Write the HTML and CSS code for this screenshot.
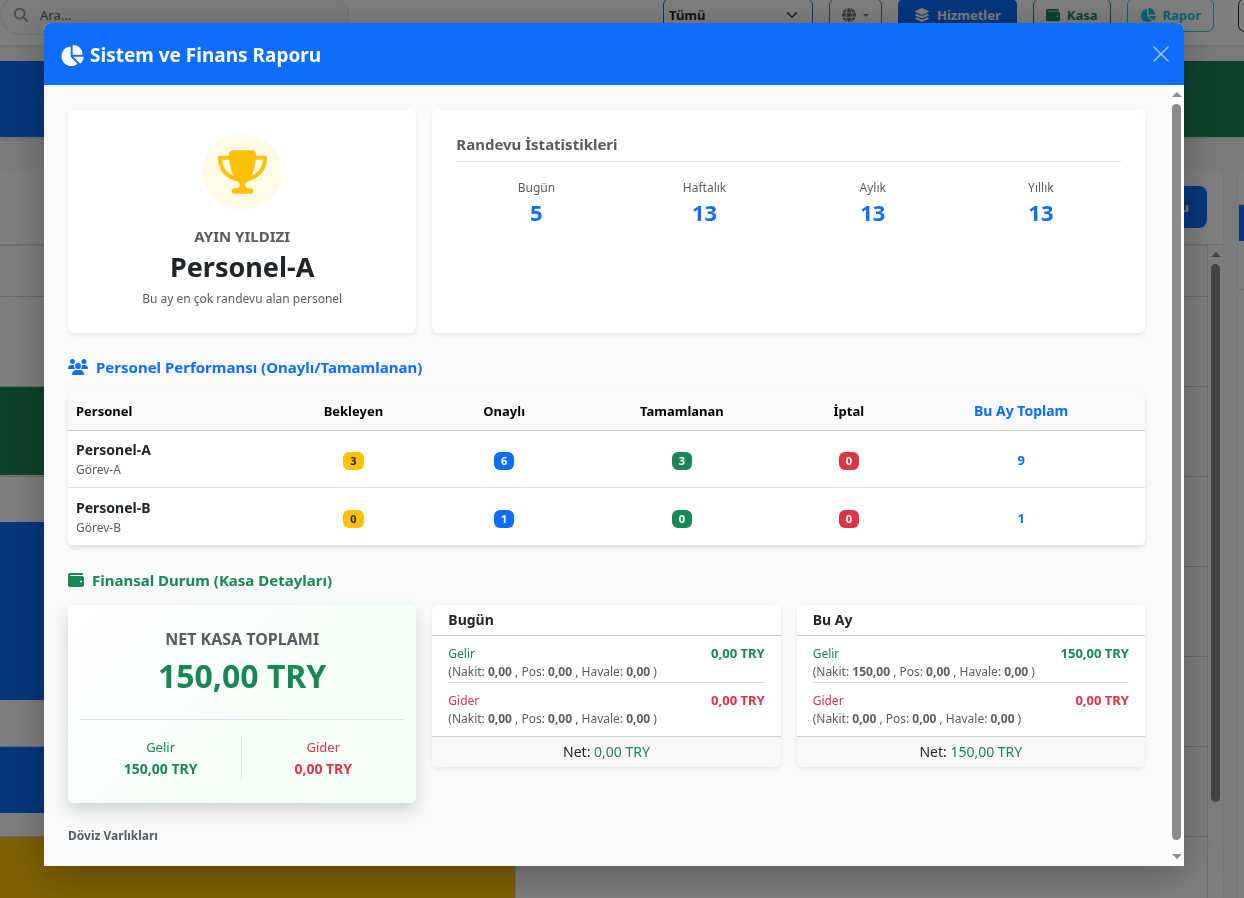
FILE: index.html
```html
<!DOCTYPE html>
<html lang="tr">
<head>
    <meta charset="UTF-8">
    <meta name="viewport" content="width=device-width, initial-scale=1.0">
    <title>Sistem ve Finans Raporu</title>
    <link rel="stylesheet" href="styles.css">
</head>
<body>
    <!-- İkonlar -->
    <svg class="sprite" aria-hidden="true">
        <symbol id="i-pie" viewBox="0 0 576 512"><path d="M304 240l0-223.4c0-9 7-16.6 16-16.6C443.7 0 544 100.3 544 224c0 9-7.600 16-16.600 16L304 240zM32 272C32 150.700 122.100 50.300 239 34.300c9.200-1.300 17 6.100 17 15.400L256 288 412.500 444.500c6.700 6.700 6.200 17.700-1.500 23.100C371.800 495.600 323.800 512 272 512C139.500 512 32 404.600 32 272zm526.400 16c9.300 0 16.600 7.800 15.400 17c-7.700 55.900-34.600 105.600-73.900 142.300c-6 5.600-15.400 5.200-21.200-.7L320 288l238.400 0z"/></symbol>
        <symbol id="i-search" viewBox="0 0 512 512"><path d="M416 208c0 45.900-14.900 88.300-40 122.700L502.600 457.400c12.500 12.500 12.500 32.800 0 45.300s-32.800 12.500-45.300 0L330.700 376c-34.400 25.200-76.800 40-122.700 40C93.100 416 0 322.900 0 208S93.100 0 208 0S416 93.100 416 208zM208 352a144 144 0 1 0 0-288 144 144 0 1 0 0 288z"/></symbol>
        <symbol id="i-wallet" viewBox="0 0 512 512"><path d="M64 32C28.700 32 0 60.700 0 96L0 416c0 35.300 28.700 64 64 64l384 0c35.300 0 64-28.700 64-64l0-224c0-35.300-28.700-64-64-64L80 128c-8.800 0-16-7.200-16-16s7.200-16 16-16l368 0c17.700 0 32-14.300 32-32s-14.300-32-32-32L64 32zM416 272a32 32 0 1 1 0 64 32 32 0 1 1 0-64z"/></symbol>
        <symbol id="i-layers" viewBox="0 0 576 512"><path d="M264.500 5.200c14.900-6.900 32.100-6.900 47 0l218.600 101c8.500 3.900 13.900 12.400 13.900 21.800s-5.400 17.900-13.900 21.800l-218.600 101c-14.900 6.900-32.100 6.900-47 0L45.900 149.800C37.400 145.800 32 137.300 32 128s5.400-17.900 13.900-21.800L264.500 5.200zM476.900 209.600l53.200 24.600c8.500 3.900 13.900 12.400 13.900 21.800s-5.400 17.900-13.900 21.800l-218.600 101c-14.900 6.900-32.100 6.900-47 0L45.900 277.800C37.400 273.800 32 265.300 32 256s5.400-17.900 13.900-21.800l53.200-24.600 152 70.200c23.400 10.800 50.400 10.800 73.800 0l152-70.200zm-152 198.200l152-70.200 53.200 24.600c8.500 3.900 13.900 12.400 13.900 21.800s-5.400 17.900-13.900 21.800l-218.600 101c-14.900 6.900-32.100 6.900-47 0L45.900 405.800C37.400 401.800 32 393.300 32 384s5.400-17.900 13.900-21.800l53.200-24.600 152 70.200c23.400 10.800 50.400 10.800 73.800 0z"/></symbol>
        <symbol id="i-globe" viewBox="0 0 512 512"><path d="M352 256c0 22.200-1.200 43.600-3.300 64H163.300c-2.200-20.400-3.300-41.800-3.300-64s1.200-43.600 3.300-64H348.700c2.200 20.400 3.300 41.800 3.300 64zm28.800-64H503.900c5.300 20.500 8.100 41.900 8.100 64s-2.800 43.500-8.100 64H380.800c2.100-20.600 3.200-42 3.200-64s-1.100-43.400-3.200-64zm112.600-32H376.700c-10-63.900-29.800-117.400-55.300-151.600c78.300 20.700 142 77.500 171.900 151.600zm-149.100 0H167.700c6.100-36.400 15.500-68.600 27-94.700c10.500-23.600 22.200-40.700 33.500-51.500C239.400 3.200 248.700 0 256 0s16.600 3.200 27.800 13.800c11.300 10.800 23 27.900 33.500 51.500c11.600 26 20.900 58.200 27 94.700zm-209 0H18.600C48.600 85.900 112.200 29.100 190.600 8.400C165.100 42.600 145.300 96.100 135.300 160zM8.100 192H131.200c-2.100 20.600-3.200 42-3.200 64s1.100 43.400 3.200 64H8.100C2.800 299.500 0 278.100 0 256s2.800-43.500 8.100-64zM194.700 446.600c-11.600-26-20.900-58.200-27-94.600H344.300c-6.100 36.400-15.500 68.600-27 94.600c-10.500 23.600-22.200 40.700-33.500 51.500C272.600 508.800 263.300 512 256 512s-16.600-3.200-27.800-13.800c-11.300-10.800-23-27.900-33.500-51.500zM135.300 352c10 63.900 29.800 117.400 55.300 151.600C112.200 482.900 48.600 426.100 18.600 352H135.300zm358.100 0c-30 74.100-93.600 130.900-171.900 151.600c25.500-34.200 45.200-87.700 55.300-151.600H493.400z"/></symbol>
        <symbol id="i-users" viewBox="0 0 640 512"><path d="M144 0a80 80 0 1 1 0 160A80 80 0 1 1 144 0zM512 0a80 80 0 1 1 0 160A80 80 0 1 1 512 0zM0 298.700C0 239.800 47.800 192 106.700 192h42.700c15.900 0 31 3.500 44.600 9.700c-1.300 7.200-1.900 14.700-1.900 22.300c0 38.200 16.800 72.500 43.300 96c-.2 0-.4 0-.7 0H21.300C9.600 320 0 310.400 0 298.700zM405.300 320c-.2 0-.4 0-.7 0c26.600-23.500 43.300-57.800 43.300-96c0-7.600-.7-15-1.900-22.300c13.600-6.300 28.700-9.700 44.600-9.700h42.700C592.200 192 640 239.800 640 298.700c0 11.800-9.600 21.300-21.300 21.300H405.300zM224 224a96 96 0 1 1 192 0 96 96 0 1 1 -192 0zM128 485.300C128 411.700 187.700 352 261.300 352H378.700C452.300 352 512 411.700 512 485.300c0 14.700-11.900 26.700-26.700 26.700H154.700c-14.700 0-26.700-11.900-26.700-26.700z"/></symbol>
        <symbol id="i-trophy" viewBox="0 0 576 512"><path d="M400 0L176 0c-26.500 0-48.100 21.800-47.100 48.200c.2 5.300 .4 10.600 .7 15.800L24 64C10.700 64 0 74.700 0 88c0 92.600 33.500 157 78.500 200.700c44.300 43.100 98.300 64.800 138.100 75.800c23.400 6.500 39.400 26 39.400 45.600c0 20.900-17 37.900-37.900 37.900L192 448c-17.700 0-32 14.300-32 32s14.300 32 32 32l192 0c17.700 0 32-14.300 32-32s-14.300-32-32-32l-26.100 0C337 448 320 431 320 410.100c0-19.600 15.900-39.200 39.400-45.600c39.900-11 93.900-32.700 138.200-75.800C542.500 245 576 180.600 576 88c0-13.300-10.700-24-24-24L446.400 64c.3-5.200 .5-10.400 .7-15.800C448.100 21.800 426.500 0 400 0zM48.900 112l84.400 0c9.100 90.100 29.200 150.300 51.900 190.600c-24.900-11-50.800-26.500-73.200-48.300c-32-31.100-58-76-63-142.300zM464.100 254.300c-22.400 21.800-48.300 37.300-73.200 48.300c22.700-40.300 42.800-100.500 51.900-190.600l84.400 0c-5.100 66.300-31.100 111.200-63 142.300z"/></symbol>
    </svg>

    <div class="page">
        <header class="topbar">
            <div class="search">
                <svg class="icon"><use href="#i-search"/></svg>
                <input type="text" placeholder="Ara..." aria-label="Ara">
            </div>
            <div class="actions">
                <select class="filter" aria-label="Personel filtresi">
                    <option>Tümü</option>
                </select>
                <button class="btn btn-grey" aria-label="Dil"><svg class="icon"><use href="#i-globe"/></svg><span class="caret"></span></button>
                <button class="btn btn-blue"><svg class="icon icon-wide"><use href="#i-layers"/></svg>Hizmetler</button>
                <button class="btn btn-green"><svg class="icon"><use href="#i-wallet"/></svg>Kasa</button>
                <button class="btn btn-cyan"><svg class="icon icon-wide"><use href="#i-pie"/></svg>Rapor</button>
                <button class="btn btn-dark" aria-label="Tema"></button>
            </div>
        </header>

        <div class="stats">
            <div class="stat stat-blue"></div>
            <div class="stat stat-green"></div>
        </div>

        <div class="board">
            <section class="panel calendar">
                <div class="calendar-top">
                    <button class="btn-new">Yeni Randevu</button>
                </div>
                <div class="calendar-main">
                    <div class="calendar-grid">
                        <div class="calendar-head"></div>
                        <div class="calendar-rows">
                            <div class="day">
                                <div class="event event-green"></div>
                                <div class="event event-long"></div>
                                <div class="event event-short"></div>
                                <div class="event event-yellow"></div>
                            </div>
                        </div>
                    </div>
                    <div class="scrollbar scrollbar-board">
                        <span class="arrow arrow-up"></span>
                        <span class="thumb"></span>
                    </div>
                </div>
            </section>
            <aside class="panel side">
                <div class="side-tab"></div>
                <div class="side-row"></div>
            </aside>
        </div>
    </div>

    <div class="backdrop">
        <div class="modal" role="dialog" aria-labelledby="modalTitle">
            <div class="modal-header">
                <h5 class="modal-title" id="modalTitle"><svg class="icon"><use href="#i-pie"/></svg>Sistem ve Finans Raporu</h5>
                <button class="btn-close" aria-label="Kapat">
                    <svg viewBox="0 0 16 16"><path d="M1 1L15 15M15 1L1 15"/></svg>
                </button>
            </div>

            <div class="modal-main">
                <div class="modal-body">
                    <div class="grid">
                        <div class="card star">
                            <div class="star-icon"><svg><use href="#i-trophy"/></svg></div>
                            <h6 class="card-title">AYIN YILDIZI</h6>
                            <h3 class="star-name">Personel-A</h3>
                            <p class="small muted">Bu ay en çok randevu alan personel</p>
                        </div>
                        <div class="card summary">
                            <h6 class="card-title summary-title">Randevu İstatistikleri</h6>
                            <div class="summary-list">
                                <div><div class="small muted">Bugün</div><div class="number">5</div></div>
                                <div><div class="small muted">Haftalık</div><div class="number">13</div></div>
                                <div><div class="small muted">Aylık</div><div class="number">13</div></div>
                                <div><div class="small muted">Yıllık</div><div class="number">13</div></div>
                            </div>
                        </div>
                    </div>

                    <h6 class="section-title blue"><svg class="icon-users"><use href="#i-users"/></svg>Personel Performansı (Onaylı/Tamamlanan)</h6>
                    <table class="table">
                        <thead>
                            <tr>
                                <th class="col-name">Personel</th>
                                <th class="col-pending">Bekleyen</th>
                                <th class="col-approved">Onaylı</th>
                                <th class="col-done">Tamamlanan</th>
                                <th class="col-cancel">İptal</th>
                                <th class="col-total">Bu Ay Toplam</th>
                            </tr>
                        </thead>
                        <tbody>
                            <tr>
                                <td><div class="name">Personel-A</div><div class="small muted">Görev-A</div></td>
                                <td><span class="badge bg-yellow">3</span></td>
                                <td><span class="badge bg-blue">6</span></td>
                                <td><span class="badge bg-green">3</span></td>
                                <td><span class="badge bg-red">0</span></td>
                                <td class="total">9</td>
                            </tr>
                            <tr>
                                <td><div class="name">Personel-B</div><div class="small muted">Görev-B</div></td>
                                <td><span class="badge bg-yellow">0</span></td>
                                <td><span class="badge bg-blue">1</span></td>
                                <td><span class="badge bg-green">0</span></td>
                                <td><span class="badge bg-red">0</span></td>
                                <td class="total">1</td>
                            </tr>
                        </tbody>
                    </table>

                    <h6 class="section-title green"><svg class="icon"><use href="#i-wallet"/></svg>Finansal Durum (Kasa Detayları)</h6>
                    <div class="grid finance">
                        <div class="card net">
                            <h6 class="card-title net-title">NET KASA TOPLAMI</h6>
                            <div class="net-total">150,00 TRY</div>
                            <div class="net-split">
                                <div class="green">Gelir<strong>150,00 TRY</strong></div>
                                <div class="red">Gider<strong>0,00 TRY</strong></div>
                            </div>
                        </div>

                        <div class="card period">
                            <div class="period-header">Bugün</div>
                            <div class="period-body">
                                <div class="line green"><span>Gelir</span><strong>0,00 TRY</strong></div>
                                <div class="detail">(Nakit: <b>0,00</b> , Pos: <b>0,00</b> , Havale: <b>0,00</b> )</div>
                                <div class="line red"><span>Gider</span><strong>0,00 TRY</strong></div>
                                <div class="detail">(Nakit: <b>0,00</b> , Pos: <b>0,00</b> , Havale: <b>0,00</b> )</div>
                            </div>
                            <div class="period-footer">Net: <span class="green">0,00 TRY</span></div>
                        </div>

                        <div class="card period">
                            <div class="period-header">Bu Ay</div>
                            <div class="period-body">
                                <div class="line green"><span>Gelir</span><strong>150,00 TRY</strong></div>
                                <div class="detail">(Nakit: <b>150,00</b> , Pos: <b>0,00</b> , Havale: <b>0,00</b> )</div>
                                <div class="line red"><span>Gider</span><strong>0,00 TRY</strong></div>
                                <div class="detail">(Nakit: <b>0,00</b> , Pos: <b>0,00</b> , Havale: <b>0,00</b> )</div>
                            </div>
                            <div class="period-footer">Net: <span class="green">150,00 TRY</span></div>
                        </div>
                    </div>

                    <h6 class="currency-title">Döviz Varlıkları</h6>
                </div>
                <div class="scrollbar scrollbar-modal">
                    <span class="arrow arrow-up"></span>
                    <span class="thumb"></span>
                    <span class="arrow arrow-down"></span>
                </div>
            </div>
        </div>
    </div>
</body>
</html>
```

FILE: styles.css
```css
* {
    margin: 0;
    padding: 0;
    box-sizing: border-box;
}

body {
    font-family: 'Segoe UI', 'Noto Sans', sans-serif;
    font-size: 14px;
    line-height: 20px;
    color: #212529;
    background: #f5f7fb;
    overflow: hidden;
}

button, input, select {
    font: inherit;
}

svg {
    fill: currentColor;
    flex: none;
}

.sprite {
    position: absolute;
    width: 0;
    height: 0;
}

.icon {
    width: 14px;
    height: 14px;
}

.icon-wide {
    width: 16px;
}

.blue { color: #0d6efd; }
.green { color: #198754; }
.red { color: #dc3545; }
.muted { color: #595c5f; }

.small {
    font-size: 12px;
}

/* Arka plandaki sayfa */
.page {
    display: flex;
    flex-direction: column;
    height: 100vh;
    overflow: hidden;
}

.topbar {
    display: flex;
    flex: none;
    align-items: center;
    justify-content: space-between;
    height: 60px;
    margin-top: -15px;
    margin-right: -36px;
    background: #fff;
    box-shadow: 0 2px 4px rgba(0, 0, 0, 0.1);
}

.search {
    display: flex;
    align-items: center;
    gap: 12px;
    width: 349px;
    height: 40px;
    padding: 0 13px;
    border: 1px solid #dfe3ee;
    border-radius: 20px;
    background: #f8f9fa;
    color: #8a92a3;
}

.search input {
    flex: 1;
    min-width: 0;
    border: 0;
    background: none;
    font-size: 13px;
}

.search input::placeholder {
    color: #595c5f;
}

.actions {
    display: flex;
    gap: 16px;
}

.filter {
    width: 150px;
    height: 34px;
    padding: 0 5px;
    border: 1px solid #0d6efd;
    border-radius: 7px;
    appearance: none;
    background: #fff url("data:image/svg+xml,%3Csvg xmlns='http://www.w3.org/2000/svg' viewBox='0 0 16 16'%3E%3Cpath fill='none' stroke='%23343a40' stroke-width='2' stroke-linecap='round' stroke-linejoin='round' d='m2 5 6 6 6-6'/%3E%3C/svg%3E") no-repeat right 13px center / 14px 12px;
    color: #212529;
    font-size: 13px;
    font-weight: 700;
}

.btn {
    display: flex;
    align-items: center;
    gap: 7px;
    height: 34px;
    padding: 0 12px;
    border: 1px solid;
    border-radius: 7px;
    background: none;
    font-size: 13px;
    font-weight: 700;
}

.btn-grey { color: #6c757d; }
.btn-green { color: #198754; }
.btn-cyan { color: #0dcaf0; }
.btn-dark { width: 42px; margin-left: 8px; color: #212529; }

.btn-blue {
    padding: 0 15px;
    border-color: #0d6efd;
    background: #0d6efd;
    color: #fff;
}

.caret {
    border: 3px solid transparent;
    border-top-color: currentColor;
    border-bottom: 0;
}

.stats {
    display: flex;
    flex: none;
    height: 76px;
    margin-top: 16px;
}

.stat {
    flex: 1;
    box-shadow: 0 2px 4px rgba(0, 0, 0, 0.1);
}

.stat-blue { background: #0d6efd; }
.stat-green { background: #198754; }

.board {
    display: flex;
    flex: 1;
    gap: 16px;
    min-height: 0;
    margin-top: 32px;
}

.panel {
    background: #fff;
    border-radius: 6px 6px 0 0;
    box-shadow: 0 2px 4px rgba(0, 0, 0, 0.08);
}

.calendar {
    display: flex;
    flex: 1;
    flex-direction: column;
}

.calendar-top {
    display: flex;
    justify-content: flex-end;
    align-items: center;
    height: 76px;
    padding: 0 16px;
    border-bottom: 1px solid #ddd;
}

.btn-new {
    height: 42px;
    padding: 0 18px;
    border: 0;
    border-radius: 8px;
    background: #0d6efd;
    color: #fff;
    font-size: 13px;
    font-weight: 700;
}

.calendar-main {
    display: flex;
    flex: 1;
    min-height: 0;
}

.calendar-grid {
    display: flex;
    flex: 1;
    flex-direction: column;
    border-right: 1px solid #ddd;
}

.calendar-head {
    flex: none;
    height: 52px;
    border-top: 1px solid #ddd;
    border-bottom: 1px solid #ccc;
}

.calendar-rows {
    flex: 1;
    min-height: 0;
    overflow: hidden;
    background: repeating-linear-gradient(transparent 0 89px, #d4d4d4 89px 90px);
}

.day {
    display: flow-root;
    width: 516px;
    border-right: 1px solid #ddd;
}

.event { background: #0d6efd; }

.event-green {
    height: 88px;
    margin-top: 90px;
    background: #198754;
}

.event-long {
    height: 178px;
    margin-top: 47px;
}

.event-short {
    height: 66px;
    margin-top: 47px;
}

.event-yellow {
    height: 88px;
    margin-top: 24px;
    background: #ffc107;
}

.side {
    width: 5px;
    padding-top: 35px;
}

.side-tab {
    height: 37px;
    border-top: 1px solid #ddd;
    background: #0d6efd;
}

.side-row {
    height: 49px;
    border-bottom: 1px solid #ddd;
}

/* Kaydırma çubukları */
.scrollbar {
    display: flex;
    flex: none;
    flex-direction: column;
    align-items: center;
    width: 15px;
    padding: 7px 0;
    background: #fcfcfc;
}

.arrow {
    border: 5px solid transparent;
}

.arrow-up {
    border-top: 0;
    border-bottom-color: #8b8b8b;
}

.arrow-down {
    border-bottom: 0;
    border-top-color: #8b8b8b;
}

.thumb {
    flex: 1;
    width: 9px;
    margin: 7px 0 14px;
    border-radius: 5px;
    background: #8b8b8b;
}

.scrollbar-board .thumb {
    margin-bottom: 89px;
}

/* Modal */
.backdrop {
    position: fixed;
    inset: 0;
    display: flex;
    justify-content: center;
    padding: 23px 60px 32px 44px;
    background: rgba(0, 0, 0, 0.5);
}

.modal {
    display: flex;
    flex: 1;
    flex-direction: column;
    max-width: 1140px;
    border-radius: 7px 7px 0 0;
    overflow: hidden;
    background: #f8f9fa;
    box-shadow: 0 8px 40px rgba(0, 0, 0, 0.3);
}

.modal-header {
    display: flex;
    flex: none;
    align-items: center;
    justify-content: space-between;
    height: 62px;
    padding: 0 15px 0 16px;
    background: #0d6efd;
    color: #fff;
}

.modal-title {
    display: flex;
    align-items: center;
    gap: 6px;
    padding-top: 2px;
    font-size: 19px;
    line-height: 24px;
}

.modal-title .icon {
    width: 24px;
    height: 21px;
}

.btn-close {
    width: 16px;
    height: 16px;
    border: 0;
    background: none;
    color: #fff;
    opacity: 0.6;
}

.btn-close svg {
    display: block;
    stroke: currentColor;
    stroke-width: 1.5;
    stroke-linecap: round;
}

.modal-main {
    display: flex;
    flex: 1;
    min-height: 0;
}

.modal-body {
    flex: 1;
    min-width: 0;
    padding: 25px 24px;
    overflow: hidden;
    background: #f8f9fb;
}

.grid {
    display: grid;
    grid-template-columns: repeat(3, 1fr);
    align-items: start;
    gap: 16px;
}

.card {
    border-radius: 6px;
    background: #fff;
    box-shadow: 0 2px 4px rgba(0, 0, 0, 0.08);
}

.card-title {
    color: #595c5f;
    font-size: 15px;
    line-height: 20px;
}

.star {
    padding: 24px;
    text-align: center;
}

.star-icon {
    display: flex;
    align-items: center;
    justify-content: center;
    width: 80px;
    height: 76px;
    margin: 0 auto 16px;
    border-radius: 50%;
    background: #fff9e6;
    color: #ffc107;
}

.star-icon svg {
    width: 49px;
    height: 44px;
}

.star-name {
    margin: 4px 0 5px;
    font-size: 27px;
    line-height: 34px;
}

.summary {
    grid-column: span 2;
    align-self: stretch;
    padding: 24px;
}

.summary-title {
    padding-bottom: 7px;
    border-bottom: 1px solid #dee2e6;
}

.summary-list {
    display: grid;
    grid-template-columns: repeat(4, 1fr);
    gap: 8px;
    margin-top: 16px;
    text-align: center;
}

.number {
    color: #0d6efd;
    font-size: 22px;
    font-weight: 700;
    line-height: 28px;
}

.section-title {
    display: flex;
    align-items: center;
    gap: 8px;
    margin: 24px 0 15px;
    font-size: 15px;
    line-height: 20px;
}

.section-title .icon {
    width: 16px;
    height: 16px;
}

.icon-users {
    width: 20px;
    height: 16px;
}

.table {
    width: 100%;
    border-collapse: separate;
    border-spacing: 0;
    border-radius: 6px;
    table-layout: fixed;
    overflow: hidden;
    background: #fff;
    box-shadow: 0 2px 4px rgba(0, 0, 0, 0.1);
    text-align: center;
}

.table th {
    height: 39px;
    padding: 0 8px;
    border-bottom: 1px solid #c6c7c8;
    background: #f8f9fa;
    color: #000;
    font-size: 13px;
}

.table td {
    height: 57px;
    padding: 9px 8px 7px;
    border-bottom: 1px solid #dee2e6;
}

.table tr:last-child td {
    height: 58px;
}

.table th:first-child,
.table td:first-child {
    text-align: left;
}

.col-name { width: 18%; }
.col-pending { width: 17%; }
.col-approved { width: 11%; }
.col-done { width: 22%; }
.col-cancel { width: 9%; }
.col-total { width: 23%; }

.table th.col-total {
    color: #0d6efd;
    font-size: 14px;
}

.name {
    font-weight: 700;
}

.badge {
    display: inline-block;
    padding: 0 7px;
    border-radius: 6px;
    color: #fff;
    font-size: 11px;
    font-weight: 700;
    line-height: 18px;
}

.bg-yellow { background: #ffc107; color: #212529; }
.bg-blue { background: #0d6efd; }
.bg-green { background: #198754; }
.bg-red { background: #dc3545; }

.total {
    color: #0d6efd;
    font-size: 13px;
    font-weight: 700;
}

.net {
    padding: 24px 12px;
    background: linear-gradient(135deg, #fff 0%, #f0fff4 100%);
    box-shadow: 0 8px 16px rgba(0, 0, 0, 0.15);
    text-align: center;
}

.net-title {
    font-size: 16px;
}

.net-total {
    margin-top: 5px;
    padding-bottom: 21px;
    border-bottom: 1px solid #dee2e6;
    color: #198754;
    font-size: 32px;
    font-weight: 700;
    line-height: 44px;
}

.net-split {
    display: grid;
    grid-template-columns: 1fr 1fr;
    margin-top: 16px;
    font-size: 13px;
    line-height: 21px;
}

.net-split div {
    padding-top: 1px;
}

.net-split div:first-child {
    border-right: 1px solid #dee2e6;
}

.net-split strong {
    display: block;
    font-size: 14px;
}

.period {
    overflow: hidden;
}

.period-header {
    height: 31px;
    padding: 5px 16px;
    border-bottom: 1px solid #ccc;
    font-weight: 700;
}

.period-body {
    padding: 8px 16px;
    font-size: 12px;
}

.line {
    display: flex;
    justify-content: space-between;
    line-height: 19px;
}

.line strong {
    font-size: 13px;
}

.detail {
    color: #595c5f;
    line-height: 18px;
}

.detail + .line {
    margin-top: 1px;
    padding-top: 8px;
    border-top: 1px solid #dee2e6;
}

.period-footer {
    height: 31px;
    padding: 5px 16px;
    border-top: 1px solid #ccc;
    background: #f7f7f7;
    text-align: center;
}

.currency-title {
    margin-top: 23px;
    color: #595c5f;
    font-size: 12px;
}
```
